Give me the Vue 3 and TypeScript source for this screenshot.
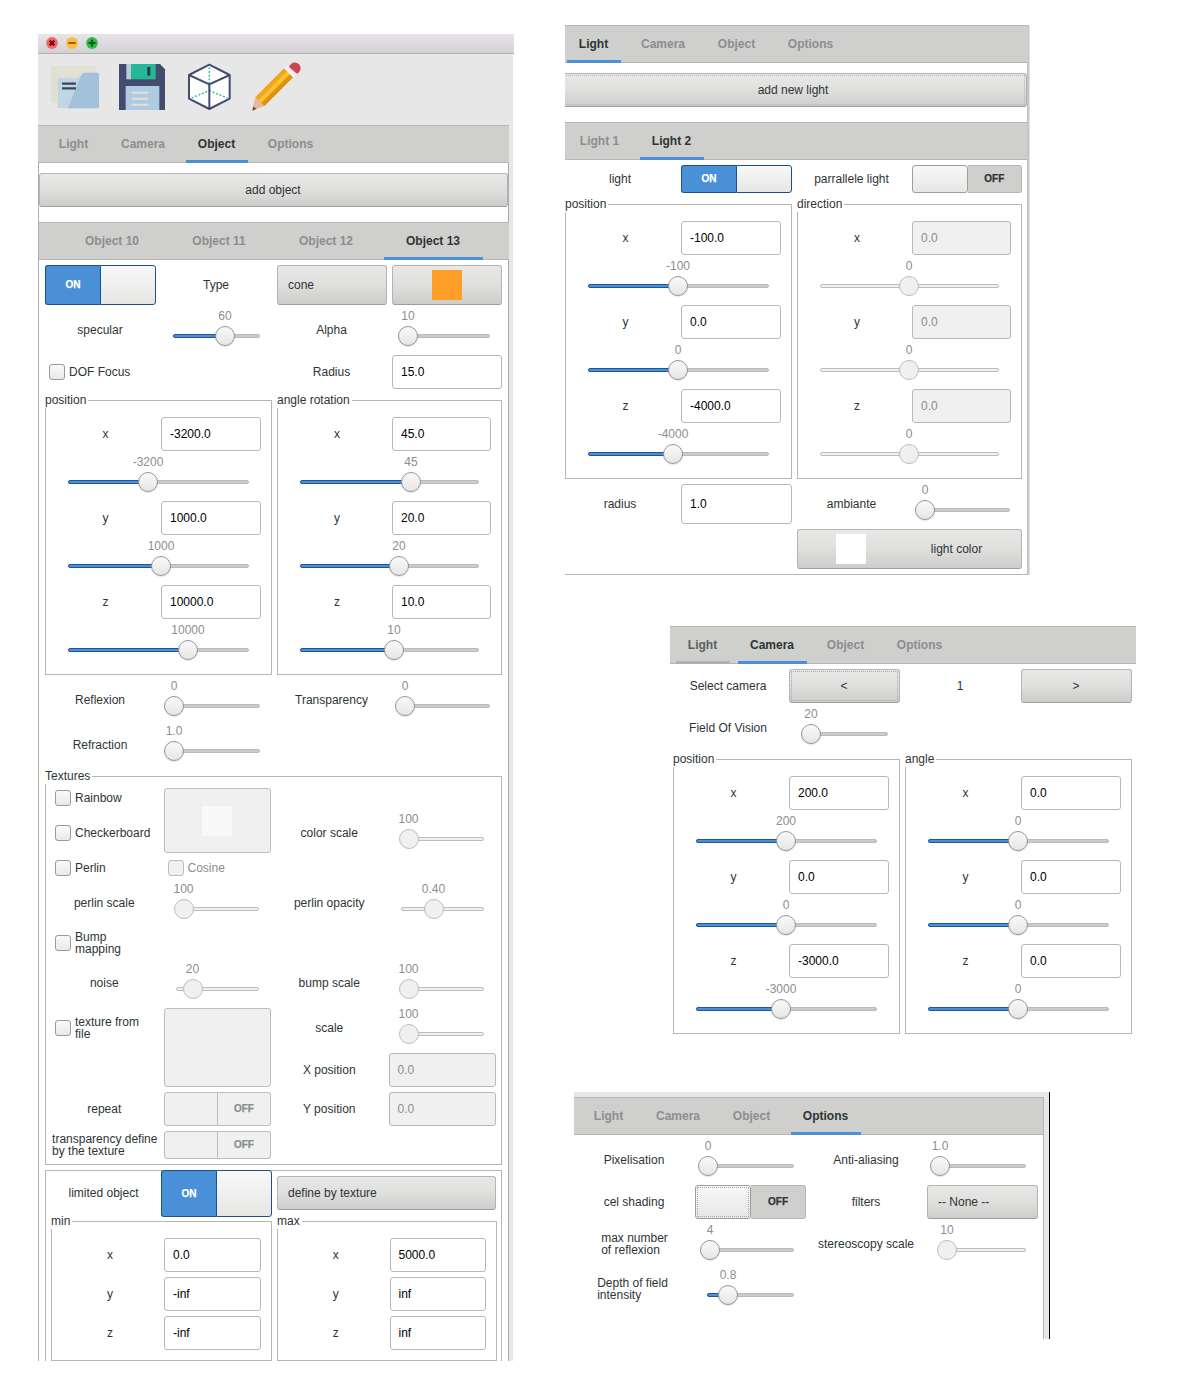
<script setup lang="ts">
import { h, type FunctionalComponent } from 'vue'

interface Tab { name: string; width: number; state?: 'active' | 'hover' }
interface Axis { name: string; value: string; mark?: string; at?: number }

// Horizontal slider; `at` is the thumb centre measured from the track start.
const Slider: FunctionalComponent<{ mark: string; at: number; filled?: boolean; disabled?: boolean }> = (p) =>
  h('div', { class: ['slider', { disabled: p.disabled }] }, [
    h('div', { class: 'track' }, [
      p.filled ? h('div', { class: 'fill', style: { width: `${p.at}px` } }) : null,
      h('span', { class: 'mark', style: { left: `${p.at}px` } }, p.mark),
      h('span', { class: 'thumb', style: { left: `${p.at}px` } }),
    ]),
  ])

const Field: FunctionalComponent<{ value: string; disabled?: boolean }> = (p) =>
  h('div', { class: ['field', { disabled: p.disabled }] }, p.value)

const Check: FunctionalComponent<{ label: string; disabled?: boolean }> = (p) =>
  h('label', { class: ['check', { disabled: p.disabled }] }, [h('span', { class: 'box' }), h('span', { class: 'check-text' }, p.label)])

const Toggle: FunctionalComponent<{ on?: boolean; disabled?: boolean; focused?: boolean }> = (p) => {
  const knob = h('span', { class: ['knob', { focused: p.focused }] })
  const text = h('span', { class: 'state' }, p.on ? 'ON' : 'OFF')
  return h('div', { class: ['toggle', p.on ? 'on' : 'off', { disabled: p.disabled }] }, p.on ? [text, knob] : [knob, text])
}

const TabBar: FunctionalComponent<{ tabs: Tab[] }> = (p) =>
  h('nav', { class: 'tabs' }, p.tabs.map((t) => h('span', { class: ['tab', t.state], style: { width: `${t.width}px` } }, t.name)))

const AxisGroup: FunctionalComponent<{ title: string; axes: Axis[]; disabled?: boolean }> = (p) =>
  h('section', { class: 'group' }, [
    h('span', { class: 'legend' }, p.title),
    h('div', { class: 'axes' }, p.axes.map((a) => [
      h('span', { class: 'label' }, a.name),
      h(Field, { value: a.value, disabled: p.disabled }),
      a.mark === undefined ? null : h(Slider, { mark: a.mark, at: a.at ?? 0, filled: !p.disabled, disabled: p.disabled }),
    ])),
  ])

const mainTabs = (active: string, hover = ''): Tab[] =>
  ([['Light', 54], ['Camera', 69], ['Object', 62], ['Options', 70]] as [string, number][]).map(([name, width]) => ({
    name, width, state: name === active ? 'active' : name === hover ? 'hover' : undefined,
  }))

const objectTabs: Tab[] = [10, 11, 12, 13].map((n) => ({ name: `Object ${n}`, width: 99, state: n === 13 ? 'active' : undefined }))
const lightTabs: Tab[] = [{ name: 'Light 1', width: 64 }, { name: 'Light 2', width: 64, state: 'active' }]

const objectPosition: Axis[] = [
  { name: 'x', value: '-3200.0', mark: '-3200', at: 80 },
  { name: 'y', value: '1000.0', mark: '1000', at: 93 },
  { name: 'z', value: '10000.0', mark: '10000', at: 120 },
]
const objectRotation: Axis[] = [
  { name: 'x', value: '45.0', mark: '45', at: 111 },
  { name: 'y', value: '20.0', mark: '20', at: 99 },
  { name: 'z', value: '10.0', mark: '10', at: 94 },
]
const limitMin: Axis[] = [{ name: 'x', value: '0.0' }, { name: 'y', value: '-inf' }, { name: 'z', value: '-inf' }]
const limitMax: Axis[] = [{ name: 'x', value: '5000.0' }, { name: 'y', value: 'inf' }, { name: 'z', value: 'inf' }]
const lightPosition: Axis[] = [
  { name: 'x', value: '-100.0', mark: '-100', at: 90 },
  { name: 'y', value: '0.0', mark: '0', at: 90 },
  { name: 'z', value: '-4000.0', mark: '-4000', at: 85 },
]
const zeroAxes = (at: number): Axis[] => ['x', 'y', 'z'].map((name) => ({ name, value: '0.0', mark: '0', at }))
const cameraPosition: Axis[] = [
  { name: 'x', value: '200.0', mark: '200', at: 90 },
  { name: 'y', value: '0.0', mark: '0', at: 90 },
  { name: 'z', value: '-3000.0', mark: '-3000', at: 85 },
]
</script>

<template>
  <main class="page">
    <section class="window">
      <header class="titlebar">
        <svg width="60" height="14" viewBox="0 0 60 14">
          <circle cx="7" cy="7" r="5.9" fill="#f4676b" />
          <path d="M4.6 4.6l4.8 4.8M9.4 4.6l-4.8 4.8" stroke="#7d0d12" stroke-width="2.2" />
          <circle cx="27" cy="7" r="5.9" fill="#fcbd3c" />
          <path d="M23.2 7h7.6" stroke="#a35a08" stroke-width="2" />
          <circle cx="47" cy="7" r="5.9" fill="#2fbf4c" />
          <path d="M43.4 7h7.2M47 3.4v7.2" stroke="#075c18" stroke-width="2.2" />
        </svg>
      </header>

      <div class="toolbar">
        <svg class="tool" viewBox="60 108 150 150">
          <path d="M68 122H192q5 0 5 5V235H68q-5 0-5-5V127q0-5 5-5z" fill="#e2e0d3" />
          <path d="M88 158h58q4 0 7-5l4-6q3-4 8-4h37q5 0 5 5v97q0 5-5 5H88q-5 0-5-5v-82q0-5 5-5z" fill="#c1d5e6" />
          <path d="M152 154l5-7q3-4 8-4h37q5 0 5 5v97q0 5-5 5H114z" fill="#a3c1db" />
          <path d="M96 176h42M96 190h42" stroke="#3c4656" stroke-width="7" />
        </svg>
        <svg class="tool" viewBox="261 108 150 150">
          <path d="M267 117H390L405 133V255H267z" fill="#434c6e" />
          <path d="M289 117h14v46h-14z" fill="#bccbdc" />
          <path d="M303 117h74v46h-74z" fill="#25b896" />
          <path d="M352 126h9v26h-9z" fill="#26385a" />
          <path d="M287 183h101v72H287z" fill="#afcbe2" />
          <path d="M305 203h50M305 221h50M305 239h50" stroke="#e3e1d6" stroke-width="6" />
        </svg>
        <svg class="tool" viewBox="462 108 150 150">
          <path d="M538 119l61 31v71l-61 31-61-31v-71z" fill="#fff" />
          <path d="M538 127v70l-54 22M538 197l54 22" fill="none" stroke="#3bc19d" stroke-width="4.5" stroke-dasharray="6 5" />
          <path d="M538 119l61 31v71l-61 31-61-31v-71zM477 150l61 28 61-28M538 178v74" fill="none" stroke="#434c6e" stroke-width="6" stroke-linejoin="round" />
        </svg>
        <svg class="tool" viewBox="663 108 150 150">
          <path d="M667 257l9-40 27 26z" fill="#e8b79c" />
          <path d="M667 257l3-13 9 8z" fill="#6e4a41" />
          <path d="M676 217l86-87 27 27-86 86z" fill="#f2a51d" />
          <path d="M685 226l86-87 9 9-86 86z" fill="#ffc233" />
          <path d="M694 234l86-86 9 9-86 86z" fill="#e0920f" />
          <path d="M762 130l8-8 27 26-8 9z" fill="#f5f0ee" />
          <path d="M777 126c4-8 11-15 21-13 11 2 16 13 13 21-2 6-5 9-10 12z" fill="#cf4450" />
        </svg>
      </div>

      <div class="window-body">
        <TabBar class="tabs-main" :tabs="mainTabs('Object')" />
        <div class="add"><button class="btn">add object</button></div>
        <TabBar class="tabs-objects" :tabs="objectTabs" />

        <div class="form object-form">
          <Toggle :on="true" />
          <span class="label">Type</span>
          <button class="btn start">cone</button>
          <button class="btn"><i class="swatch orange"></i></button>

          <span class="label">specular</span>
          <Slider mark="60" :at="52" :filled="true" />
          <span class="label">Alpha</span>
          <Slider mark="10" :at="4" />

          <Check class="span2" label="DOF Focus" />
          <span class="label">Radius</span>
          <Field value="15.0" />

          <AxisGroup class="span2" title="position" :axes="objectPosition" />
          <AxisGroup class="span2" title="angle rotation" :axes="objectRotation" />

          <span class="label">Reflexion</span>
          <Slider mark="0" :at="1" />
          <span class="label">Transparency</span>
          <Slider mark="0" :at="1" />

          <span class="label">Refraction</span>
          <Slider mark="1.0" :at="1" />

          <section class="group span4">
            <span class="legend">Textures</span>
            <div class="textures">
              <Check label="Rainbow" />
              <button class="btn disabled rows2"><i class="swatch faint"></i></button>
              <Check class="col1" label="Checkerboard" />
              <span class="label col3">color scale</span>
              <Slider mark="100" :at="8" :disabled="true" />

              <Check class="col1" label="Perlin" />
              <Check label="Cosine" :disabled="true" />

              <span class="label col1">perlin scale</span>
              <Slider mark="100" :at="8" :disabled="true" />
              <span class="label">perlin opacity</span>
              <Slider mark="0.40" :at="33" :disabled="true" />

              <Check class="col1 narrow" label="Bump mapping" />

              <span class="label col1">noise</span>
              <Slider mark="20" :at="17" :disabled="true" />
              <span class="label">bump scale</span>
              <Slider mark="100" :at="8" :disabled="true" />

              <Check class="col1 narrow" label="texture from file" />
              <button class="btn disabled rows2"></button>
              <span class="label">scale</span>
              <Slider mark="100" :at="8" :disabled="true" />
              <span class="label col3">X position</span>
              <Field value="0.0" :disabled="true" />

              <span class="label">repeat</span>
              <Toggle :disabled="true" />
              <span class="label">Y position</span>
              <Field value="0.0" :disabled="true" />

              <span class="label multi wide">transparency define<br />by the texture</span>
              <Toggle :disabled="true" />
            </div>
          </section>

          <section class="limits span4">
            <div class="limits-head">
              <span class="label">limited object</span>
              <Toggle :on="true" />
              <button class="btn start">define by texture</button>
            </div>
            <div class="limits-groups">
              <AxisGroup title="min" :axes="limitMin" />
              <AxisGroup title="max" :axes="limitMax" />
            </div>
          </section>
        </div>
      </div>
    </section>

    <div class="side">
      <section class="panel light-panel">
        <TabBar class="tabs-light" :tabs="mainTabs('Light')" />
        <div class="light-body">
          <button class="btn add-light">add new light</button>
          <TabBar class="tabs-lights" :tabs="lightTabs" />
          <div class="form light-form">
            <span class="label">light</span>
            <Toggle :on="true" />
            <span class="label">parrallele light</span>
            <Toggle />
            <AxisGroup class="span2" title="position" :axes="lightPosition" />
            <AxisGroup class="span2" title="direction" :axes="zeroAxes(89)" :disabled="true" />
            <span class="label">radius</span>
            <Field value="1.0" />
            <span class="label">ambiante</span>
            <Slider mark="0" :at="1" />
            <button class="btn light-color"><i class="swatch white"></i><span>light color</span></button>
          </div>
        </div>
      </section>

      <section class="panel camera-panel">
        <TabBar class="tabs-camera" :tabs="mainTabs('Camera', 'Light')" />
        <div class="form camera-form">
          <span class="label">Select camera</span>
          <button class="btn dotted">&lt;</button>
          <span class="label">1</span>
          <button class="btn">&gt;</button>
          <span class="label">Field Of Vision</span>
          <Slider mark="20" :at="10" />
          <AxisGroup class="first-pair" title="position" :axes="cameraPosition" />
          <AxisGroup class="span2" title="angle" :axes="zeroAxes(90)" />
        </div>
      </section>

      <section class="panel options-panel">
        <div class="options-body">
          <TabBar class="tabs-options" :tabs="mainTabs('Options')" />
          <div class="form options-form">
            <span class="label">Pixelisation</span>
            <Slider mark="0" :at="1" />
            <span class="label">Anti-aliasing</span>
            <Slider mark="1.0" :at="1" />
            <span class="label">cel shading</span>
            <Toggle :focused="true" />
            <span class="label">filters</span>
            <button class="btn start">-- None --</button>
            <span class="label multi">max number<br />of reflexion</span>
            <Slider mark="4" :at="3" />
            <span class="label">stereoscopy scale</span>
            <Slider mark="10" :at="8" :disabled="true" />
            <span class="label multi depth">Depth of field<br />intensity</span>
            <Slider mark="0.8" :at="21" :filled="true" />
          </div>
        </div>
      </section>
    </div>
  </main>
</template>

<style>
html, body { margin: 0; background: #fff; }
</style>

<style scoped>
.page {
  display: flex;
  align-items: flex-start;
  box-sizing: border-box;
  width: 1178px;
  height: 1394px;
  overflow: hidden;
  background: #fff;
  color: #2e3436;
  font: 12px/12px "Liberation Sans", Arial, Helvetica, sans-serif;
}
.page :deep(*) { box-sizing: border-box; }

/* widgets */
:deep(.label) { display: flex; align-items: center; justify-content: center; white-space: nowrap; padding-right: 1px; }
.label.multi { display: block; align-self: center; justify-self: center; padding: 0; }
.label.wide { margin: 0 -4px; }
.label.depth { margin-right: 4px; }

:deep(.slider) { height: 40px; padding: 24px 12px 0; }
:deep(.track) { position: relative; height: 4px; border: 1px solid #bbbbb8; border-radius: 2px; background: #cbcbc9; }
:deep(.fill) { height: 4px; margin: -1px; border: 1px solid #1f5796; border-radius: 2px; background: #4a90d9; }
:deep(.mark) { position: absolute; top: -25px; margin-left: -1px; transform: translateX(-50%); color: #8b8e8f; white-space: nowrap; }
:deep(.thumb) {
  position: absolute; top: -9px; width: 20px; height: 20px; margin-left: -11px;
  border: 1px solid #969693; border-radius: 50%;
  background: linear-gradient(#f9f9f9, #e6e6e5);
  box-shadow: 0 1px 1px rgba(0, 0, 0, .12);
}
:deep(.slider.disabled .track) { background: #f0f0f0; border-color: #bdbdbb; }
:deep(.slider.disabled .thumb) { background: #f0f0f0; border-color: #bdbdbb; box-shadow: none; }

:deep(.field) {
  display: flex; align-items: center; min-height: 34px; padding: 0 8px;
  border: 1px solid #b8b8b6; border-radius: 3px; background: #fff; color: #000;
}
:deep(.field.disabled) { background: #f0f0f0; color: #8b8e8f; }

:deep(.check) { display: flex; align-items: center; padding-left: 4px; }
:deep(.box) {
  flex: none; width: 16px; height: 16px; margin-right: 4px;
  border: 1px solid #999997; border-radius: 3px; background: linear-gradient(#fafafa, #e9e9e9);
}
:deep(.check.disabled) { color: #8b8e8f; }
:deep(.check.disabled .box) { background: #f0f0f0; border-color: #bdbdbb; }
.narrow { padding-right: 14px; }

:deep(.toggle) { display: flex; border-radius: 3px; font-size: 10px; font-weight: bold; -webkit-text-stroke: .25px; }
:deep(.toggle > span) { flex: 1 1 0; display: flex; align-items: center; justify-content: center; border: 1px solid; }
:deep(.knob) { background: linear-gradient(#f8f8f8, #e6e6e5); }
:deep(.toggle.on .state) { background: #4a90d9; color: #fff; border-color: #1c5187; border-radius: 3px 0 0 3px; border-right: 0; }
:deep(.toggle.on .knob) { border-color: #1c5187; border-radius: 0 3px 3px 0; }
:deep(.toggle.off .knob) { border-color: #9d9d9a; border-radius: 3px; }
:deep(.toggle.off .state) { background: #cfcfcd; border-color: #b6b6b4; border-left: 0; border-radius: 0 3px 3px 0; }
:deep(.toggle.off.disabled .knob) { background: #f0f0f0; border-color: #bdbdbb; border-radius: 3px 0 0 3px; }
:deep(.toggle.off.disabled .state) { background: #f0f0f0; border-color: #bdbdbb; color: #8b8e8f; }
:deep(.knob.focused) { outline: 1px dotted #a9a9a7; outline-offset: -3px; }

.btn {
  display: flex; align-items: center; justify-content: center; min-height: 34px; padding: 0 1px 0 0;
  border: 1px solid #b4b4b2; border-bottom-color: #9d9d9a; border-radius: 3px;
  background: linear-gradient(#e8e8e7, #dfdfde 50%, #cdcdcb);
  color: #2e3436; font: inherit;
}
.btn.start { justify-content: flex-start; padding-left: 10px; }
.btn.disabled { background: #f0f0f0; border-color: #bdbdbb; }
.btn.dotted { outline: 1px dotted #aaa; outline-offset: -3px; }
.swatch { width: 30px; height: 30px; }
.orange { background: #ff9f28; }
.faint { background: #f9f9f9; }
.white { background: #fff; }

:deep(.tabs) {
  display: flex; gap: 8px; height: 38px; border: solid #b6b6b3; border-width: 1px 0; background: #cfcfcd;
  font-weight: bold; color: #8b8e8f;
}
:deep(.tab) { height: 37px; display: flex; align-items: center; justify-content: center; border-bottom: 3px solid transparent; padding: 2px 1px 0 0; white-space: nowrap; }
:deep(.tab.active) { color: #2e3436; border-color: #4a90d9; }
:deep(.tab.hover) { color: #5c6163; border-color: #b0b0ae; }

:deep(.group) { position: relative; margin-top: 6px; border: 1px solid #b6b6b4; }
:deep(.legend) { position: absolute; left: -1px; top: -8px; height: 15px; line-height: 14px; padding-right: 2px; background: #fff; white-space: nowrap; }
:deep(.axes) { display: grid; grid-template-columns: 1fr 1fr; gap: 5px; padding: 16px 10px 10px; }
:deep(.axes .slider) { grid-column: span 2; }

.form { display: grid; gap: 5px; }
.span2 { grid-column: span 2; }
.span4 { grid-column: span 4; }
.first-pair { grid-column: 1 / span 2; }
.rows2 { grid-row: span 2; }
.col1 { grid-column-start: 1; }
.col3 { grid-column-start: 3; }

/* main window */
.window { width: 476px; height: 1327px; margin: 34px 0 0 38px; flex: none; overflow: hidden; }
.titlebar { display: flex; height: 20px; padding: 2px 0 0 7px; border-bottom: 1px solid #b2b1b2; background: linear-gradient(#e7e5e7, #d2d0d2); }
.toolbar { display: flex; gap: 17px; width: 475px; height: 71px; padding: 7px 0 0 12px; background: #e7e7e7; }
.tool { width: 50px; height: 50px; }
.window-body { width: 475px; height: 1236px; border-left: 1px solid #adadad; border-right: 4px solid #e8e8e8; box-shadow: inset -1px 0 #aaa; padding-right: 1px; }
.tabs-main { margin: 0 -1px; padding-left: 9px; }
.tabs-objects { margin-right: -1px; padding-left: 24px; }
.add { padding: 10px 0 15px; }
.add .btn { width: 100%; height: 34px; }
.object-form {
  grid-template-columns: 111px 111px 110px 110px;
  grid-template-rows: 40px 40px 34px auto 40px 40px auto;
  padding: 5px 0 0 6px;
}
.textures {
  display: grid; gap: 5px; grid-template-columns: repeat(4, minmax(0, 1fr));
  grid-template-rows: 20px 40px 20px 40px 30px 40px 40px 34px 34px 28px;
  padding: 11px 5px 5px;
}
.limits { height: 200px; border: 1px solid #b6b6b4; padding: 0 5px; }
.limits-head { display: flex; gap: 5px; height: 45px; }
.limits-head .label { width: 106px; height: 44px; }
.limits-head .toggle { width: 111px; height: 47px; margin: -1px 0 0 -1px; }
.limits-head .btn { width: 219px; height: 34px; margin-top: 5px; }
.limits-groups { display: grid; grid-template-columns: 221px 220px; gap: 5px; margin-top: -1px; }

/* side panels */
.side { width: 613px; margin: 25px 0 0 51px; }
.light-panel { width: 465px; height: 550px; border-right: 1px solid #e2e2e1; box-shadow: inset -1px 0 #c8c8c6; padding-right: 1px; }
.tabs-light { padding-left: 2px; }
.light-body { height: 512px; padding-top: 10px; border-right: 1px solid #c3c3c1; border-bottom: 1px solid #b6b6b4; overflow: hidden; }
.add-light { width: calc(100% + 5px); height: 34px; margin: 0 0 15px -5px; outline: 1px dotted #b5b5b3; outline-offset: -3px; }
.tabs-lights { padding-left: 3px; }
.light-form {
  grid-template-columns: 111px 111px 110px 110px;
  grid-template-rows: 28px auto 40px 40px;
  padding-top: 5px;
}
.light-color { grid-column: 3 / span 2; }
.light-color .white { margin-right: 65px; }

.camera-panel { width: 466px; margin: 51px 0 0 105px; }
.tabs-camera { padding-left: 6px; }
.camera-form { grid-template-columns: repeat(4, 111px); grid-template-rows: 34px 40px auto; padding: 5px 0 0 3px; }

.options-panel { width: 476px; height: 247px; margin: 58px 0 0 9px; padding: 5px 5px 0 0; background: #e7e7e6; border-right: 1px solid #000; }
.options-body { height: 242px; background: #fff; border-right: 1px solid #b6b6b4; }
.tabs-options { padding-left: 8px; }
.options-form { grid-template-columns: repeat(4, 111px); grid-template-rows: 40px 34px 40px 40px; padding: 5px 0 0 5px; }
</style>
